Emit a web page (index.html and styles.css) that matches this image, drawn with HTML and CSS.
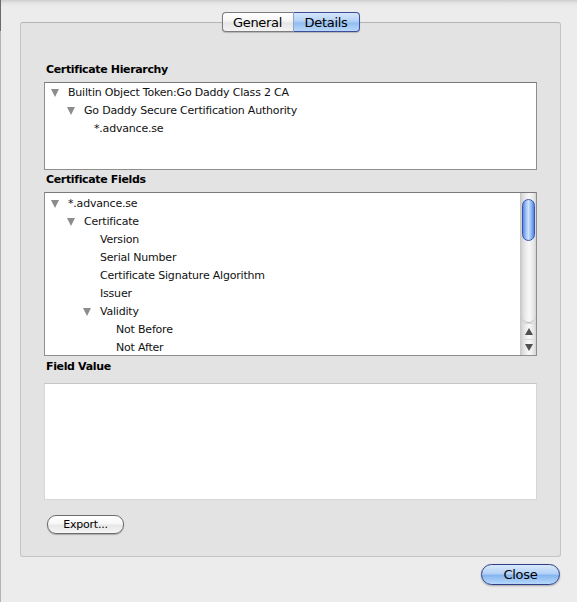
FILE: index.html
```html
<!DOCTYPE html>
<html>
<head>
<meta charset="utf-8">
<link rel="stylesheet" href="styles.css">
</head>
<body>
<div class="window">
  <div class="tabs">
    <div class="tab tab-general">General</div>
    <div class="tab tab-details">Details</div>
  </div>
  <div class="tabbox">
    <div class="label label-first">Certificate Hierarchy</div>
    <div class="list hierarchy">
      <div class="row lvl0"><span class="tri"></span>Builtin Object Token:Go Daddy Class 2 CA</div>
      <div class="row lvl1"><span class="tri"></span>Go Daddy Secure Certification Authority</div>
      <div class="row hlvl2">*.advance.se</div>
    </div>
    <div class="label label-fields">Certificate Fields</div>
    <div class="list fields">
      <div class="rows">
        <div class="row lvl0"><span class="tri"></span>*.advance.se</div>
        <div class="row lvl1"><span class="tri"></span>Certificate</div>
        <div class="row lvl2">Version</div>
        <div class="row lvl2">Serial Number</div>
        <div class="row lvl2">Certificate Signature Algorithm</div>
        <div class="row lvl2">Issuer</div>
        <div class="row lvl2t"><span class="tri"></span>Validity</div>
        <div class="row lvl3">Not Before</div>
        <div class="row lvl3">Not After</div>
      </div>
      <div class="scrollbar">
        <div class="track"><div class="thumb"></div></div>
        <div class="arrow arrow-up"><span class="ar-up"></span></div>
        <div class="arrow arrow-down"><span class="ar-down"></span></div>
      </div>
    </div>
    <div class="label label-value">Field Value</div>
    <div class="valuebox"></div>
    <div class="btnrow">
      <div class="btn btn-export">Export...</div>
    </div>
  </div>
  <div class="footer">
    <div class="btn btn-close">Close</div>
  </div>
</div>
</body>
</html>
```
FILE: styles.css
```css
html, body {
  margin: 0;
  padding: 0;
}
body {
  width: 577px;
  height: 602px;
  overflow: hidden;
  font-family: "DejaVu Sans", "Liberation Sans", sans-serif;
  font-size: 11px;
  color: #000;
}
.window {
  box-sizing: border-box;
  width: 577px;
  height: 602px;
  padding: 12px 16px 0 20px;
  background:
    linear-gradient(to bottom, #6a6a6a 0, #6a6a6a 31px, #b4b4b4 31px, #b4b4b4 100%) left top / 1px 100% no-repeat,
    linear-gradient(to bottom, #cdcdcd 0, #e4e4e4 3px, #ececec 7px, #ececec 100%);
  display: flex;
  flex-direction: column;
}
.tabs {
  display: flex;
  justify-content: center;
  height: 20px;
  position: relative;
  z-index: 1;
}
.tab {
  box-sizing: border-box;
  height: 20px;
  line-height: 19px;
  font-size: 13px;
  letter-spacing: -0.3px;
  text-align: center;
  box-shadow: 0 1px 1px rgba(0,0,0,0.2);
}
.tab-general {
  width: 71px;
  border: 1px solid #7c7c7c;
  border-right: none;
  border-radius: 4px 0 0 4px;
  background: linear-gradient(to bottom, #ffffff 0, #f6f6f6 45%, #e6e6e6 55%, #f4f4f4 100%);
}
.tab-details {
  width: 67px;
  border: 1px solid #3f4c9c;
  border-left: 1px solid #8aa8d0;
  border-radius: 0 4px 4px 0;
  background: linear-gradient(to bottom, #d6e7fb 0, #b4d2f5 45%, #92bdf0 55%, #b9d8fa 100%);
}
.tabbox {
  box-sizing: border-box;
  width: 541px;
  height: 535px;
  margin-top: -10px;
  border: 1px solid #c4c4c4;
  border-top-color: #b4b4b4;
  border-radius: 3px;
  background: #e3e3e3;
  padding: 39px 23px 0 23px;
  display: flex;
  flex-direction: column;
}
.label {
  font-weight: bold;
  height: 14px;
  line-height: 16px;
  letter-spacing: -0.35px;
  padding-left: 2px;
}
.label-fields { margin-top: 2px; }
.label-value { margin-top: 3px; }
.list {
  box-sizing: border-box;
  margin-top: 6px;
  background: #fff;
  border: 1px solid #8e8e8e;
  border-top-color: #7a7a7a;
}
.hierarchy {
  height: 88px;
  padding-top: 1px;
}
.fields {
  height: 164px;
  display: flex;
  overflow: hidden;
}
.rows {
  flex: 1;
  padding-top: 2px;
}
.row {
  height: 18px;
  line-height: 18px;
  letter-spacing: -0.2px;
  white-space: nowrap;
  color: #111;
  display: flex;
  align-items: center;
}
.tri {
  width: 17px;
  height: 18px;
  flex: none;
  display: flex;
  align-items: center;
}
.tri::before {
  content: "";
  display: block;
  width: 0;
  height: 0;
  border-left: 4.5px solid transparent;
  border-right: 4.5px solid transparent;
  border-top: 8px solid #8c8c8c;
  margin-top: -1px;
}
.lvl0 { padding-left: 6px; }
.lvl1 { padding-left: 22px; }
.lvl2 { padding-left: 55px; }
.lvl2t { padding-left: 38px; }
.lvl3 { padding-left: 71px; }
.hlvl2 { padding-left: 49px; }
.scrollbar {
  width: 15px;
  flex: none;
  display: flex;
  flex-direction: column;
  border-left: 1px solid #c9c9c9;
  background: linear-gradient(to right, #cfcfcf 0, #e8e8e8 25%, #f8f8f8 55%, #e6e6e6 85%, #d4d4d4 100%);
}
.track {
  flex: 1;
  padding: 6px 1px 0 1px;
  border-bottom: 1px solid #bdbdbd;
  border-radius: 0 0 8px 8px;
}
.thumb {
  height: 42px;
  border-radius: 7px;
  border: 1px solid #3755b4;
  box-sizing: border-box;
  background: linear-gradient(to right, #5a8ae0 0, #a6c8f7 30%, #cfe2fb 50%, #8fb8f2 75%, #4f82dc 100%);
}
.arrow {
  height: 16px;
  flex: none;
  display: flex;
  align-items: center;
  justify-content: center;
  border-top: 1px solid #d8d8d8;
  box-sizing: border-box;
}
.ar-up, .ar-down {
  width: 0;
  height: 0;
  border-left: 4px solid transparent;
  border-right: 4px solid transparent;
}
.ar-up { border-bottom: 7px solid #505050; }
.ar-down { border-top: 7px solid #505050; }
.valuebox {
  box-sizing: border-box;
  height: 117px;
  margin-top: 10px;
  background: #fff;
  border: 1px solid #d6d6d6;
  border-top-color: #c6c6c6;
}
.btnrow {
  display: flex;
  margin-top: 15px;
  padding-left: 3px;
}
.btn {
  box-sizing: border-box;
  text-align: center;
  white-space: nowrap;
}
.btn-export {
  width: 77px;
  height: 19px;
  line-height: 17px;
  border: 1px solid #6c6c6c;
  border-radius: 9px;
  letter-spacing: -0.2px;
  background: linear-gradient(to bottom, #ffffff 0, #f7f7f7 45%, #e8e8e8 55%, #f6f6f6 100%);
  box-shadow: 0 1px 1px rgba(0,0,0,0.25);
}
.footer {
  display: flex;
  justify-content: flex-end;
  padding-right: 1px;
  margin-top: 7px;
}
.btn-close {
  width: 79px;
  height: 21px;
  line-height: 19px;
  font-size: 13px;
  letter-spacing: -0.3px;
  border: 1px solid #2f3d8a;
  border-radius: 11px;
  background: linear-gradient(to bottom, #d9e9fc 0, #b3d1f6 45%, #86b6ef 55%, #b6d8fb 100%);
  box-shadow: 0 1px 2px rgba(0,0,0,0.3);
}
```
